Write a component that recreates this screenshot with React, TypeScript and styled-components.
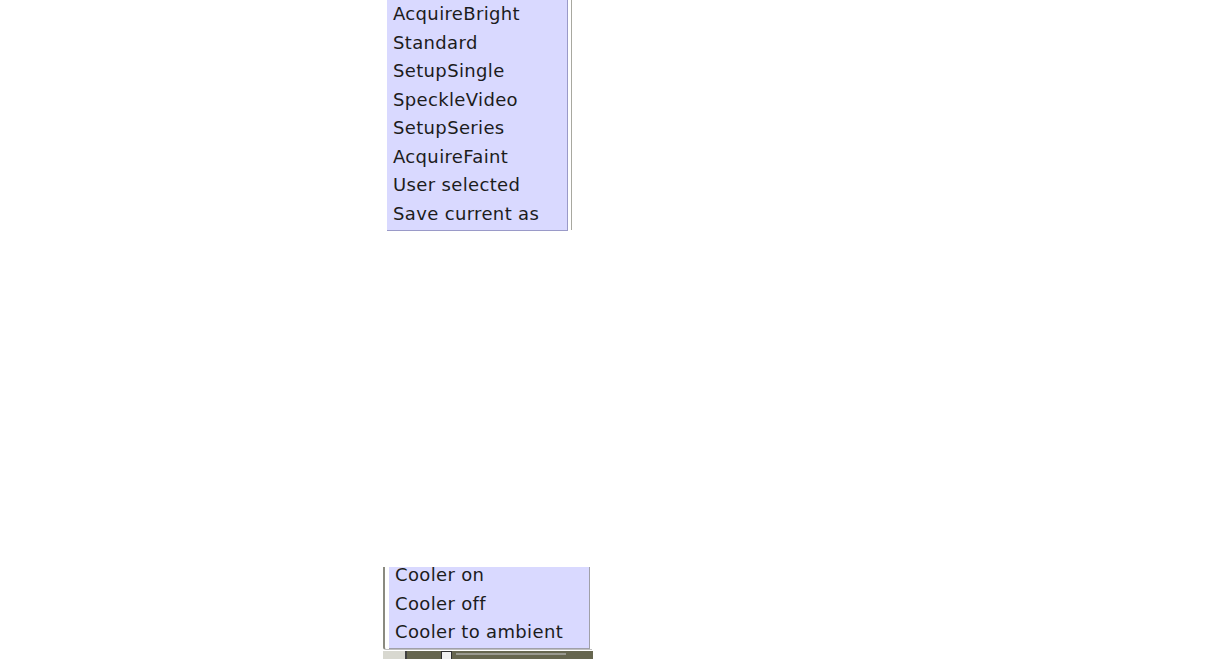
import React from "react";
import styled, { createGlobalStyle } from "styled-components";

const Global = createGlobalStyle`
  html, body { margin: 0; padding: 0; background: #ffffff; }
  body { width: 1224px; height: 659px; overflow: hidden; font-family: "DejaVu Sans", sans-serif; }
`;

const Page = styled.div`
  width: 1224px;
  height: 659px;
  display: flex;
  flex-direction: column;
  overflow: hidden;
`;

const TopArea = styled.div`
  display: flex;
  padding-left: 387px;
  height: 231px;
`;

const MenuPanel = styled.div`
  background: #d9d9ff;
  display: flex;
  flex-direction: column;
  border-right: 1px solid #9a9ac8;
  border-bottom: 1px solid #9a9ac8;
  width: 181px;
  box-sizing: border-box;
`;

const Item = styled.div`
  height: 28.5px;
  line-height: 28.5px;
  padding-left: 6px;
  font-size: 18px;
  letter-spacing: 0.35px;
  color: #1c1c1c;
  white-space: nowrap;
`;

const OuterRule = styled.div`
  width: 1px;
  margin-left: 3px;
  background: #a8a8a0;
  height: 230px;
`;

const Spacer = styled.div`
  flex: 1;
`;

const BottomArea = styled.div`
  padding-left: 383px;
  height: 92px;
  display: flex;
  flex-direction: column;
  overflow: hidden;
`;

const Frame = styled.div`
  width: 209px;
  height: 84px;
  overflow: hidden;
  display: flex;
  border-left: 2px solid #8a8a80;
  border-bottom: 1px solid #c0c0c0;
  border-bottom-left-radius: 3px;
  box-sizing: border-box;
  padding-left: 4px;
`;

const Menu2 = styled.div`
  background: #d9d9ff;
  width: 201px;
  margin-top: -6px;
  height: 88px;
  border-right: 1px solid #a0a0a8;
  border-bottom: 1px solid #a0a0a8;
  box-sizing: border-box;
`;

const Strip = styled.div`
  margin-top: 1px;
  width: 210px;
  height: 8px;
  display: flex;
  background: #66664f;
`;

const StripLeft = styled.div`
  width: 22px;
  background: #d8d8d0;
  border-right: 2px solid #404040;
`;

const StripBox = styled.div`
  width: 11px;
  height: 8px;
  margin-left: 34px;
  background: #f0f0f0;
  border: 1px solid #303030;
  border-bottom: none;
  box-sizing: border-box;
`;

const StripBand = styled.div`
  margin-left: 4px;
  margin-top: 2px;
  width: 110px;
  height: 2px;
  background: #9a9a90;
`;

const topItems = [
  "AcquireBright",
  "Standard",
  "SetupSingle",
  "SpeckleVideo",
  "SetupSeries",
  "AcquireFaint",
  "User selected",
  "Save current as",
];

const coolerItems = ["Cooler on", "Cooler off", "Cooler to ambient"];

export default function App() {
  return (
    <>
      <Global />
      <Page>
        <TopArea>
          <MenuPanel>
            {topItems.map((t) => (
              <Item key={t}>{t}</Item>
            ))}
          </MenuPanel>
          <OuterRule />
        </TopArea>
        <Spacer />
        <BottomArea>
          <Frame>
            <Menu2>
              {coolerItems.map((t) => (
                <Item key={t}>{t}</Item>
              ))}
            </Menu2>
          </Frame>
          <Strip>
            <StripLeft />
            <StripBox />
            <StripBand />
          </Strip>
        </BottomArea>
      </Page>
    </>
  );
}
